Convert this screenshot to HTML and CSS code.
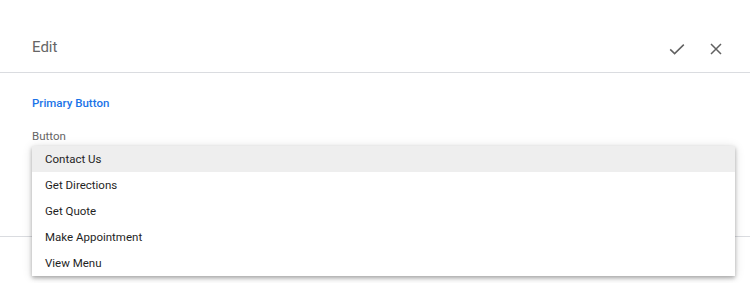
FILE: index.html
```html
<!DOCTYPE html>
<html>
<head>
<meta charset="utf-8">
<link rel="stylesheet" href="styles.css">
</head>
<body>
<div class="dialog">
  <header class="header">
    <h1 class="title">Edit</h1>
    <div class="actions">
      <button class="icon-btn" aria-label="Save">
        <svg width="20" height="20" viewBox="0 0 20 20"><path d="M3.2 10.4 L7.6 14.6 L16.8 5.6" fill="none" stroke="#616161" stroke-width="1.5"/></svg>
      </button>
      <button class="icon-btn" aria-label="Close">
        <svg width="20" height="20" viewBox="0 0 20 20"><path d="M5 5 L15 15 M15 5 L5 15" fill="none" stroke="#616161" stroke-width="1.5"/></svg>
      </button>
    </div>
  </header>
  <section class="body">
    <div class="section-title">Primary Button</div>
    <div class="field">
      <div class="field-label">Button</div>
      <div class="select-area">
        <ul class="menu">
          <li class="menu-item active">Contact Us</li>
          <li class="menu-item">Get Directions</li>
          <li class="menu-item">Get Quote</li>
          <li class="menu-item">Make Appointment</li>
          <li class="menu-item">View Menu</li>
        </ul>
      </div>
    </div>
  </section>
  <div class="divider"></div>
</div>
</body>
</html>
```

FILE: styles.css
```css
* { box-sizing: border-box; }
html, body { margin: 0; padding: 0; background: #fff; }
body { font-family: Roboto, "Noto Sans", Arial, sans-serif; width: 750px; height: 283px; overflow: hidden; }
.dialog { position: relative; }
.header {
  height: 73px;
  border-bottom: 1px solid #dadce0;
  display: flex;
  align-items: flex-start;
  justify-content: space-between;
  padding: 38px 24px 0 32px;
}
.title { margin: 0; font-size: 15px; line-height: 19px; font-weight: 400; color: #666; }
.actions { display: flex; gap: 19px; align-items: center; margin-top: 1px; }
.icon-btn { border: 0; background: none; padding: 0; width: 20px; height: 20px; display: flex; }
.body { padding: 23px 15px 0 32px; }
.section-title { font-size: 11.5px; font-weight: 500; color: #1a73e8; line-height: 14px; }
.field { margin-top: 19px; }
.field-label { font-size: 11.5px; color: #666; line-height: 14px; }
.select-area { position: relative; height: 93px; }
.menu {
  position: absolute;
  top: 3px; left: 0; right: 0;
  margin: 0; padding: 0;
  list-style: none;
  background: #fff;
  box-shadow: 0 2px 4px rgba(0,0,0,0.3), 0 1px 10px rgba(0,0,0,0.12);
  z-index: 2;
}
.menu-item { height: 26px; line-height: 26px; padding-left: 13px; font-size: 11.5px; font-weight: 400; color: #1f1f1f; }
.menu-item.active { background: #eee; }
.divider { border-top: 1px solid #dadce0; }
```
